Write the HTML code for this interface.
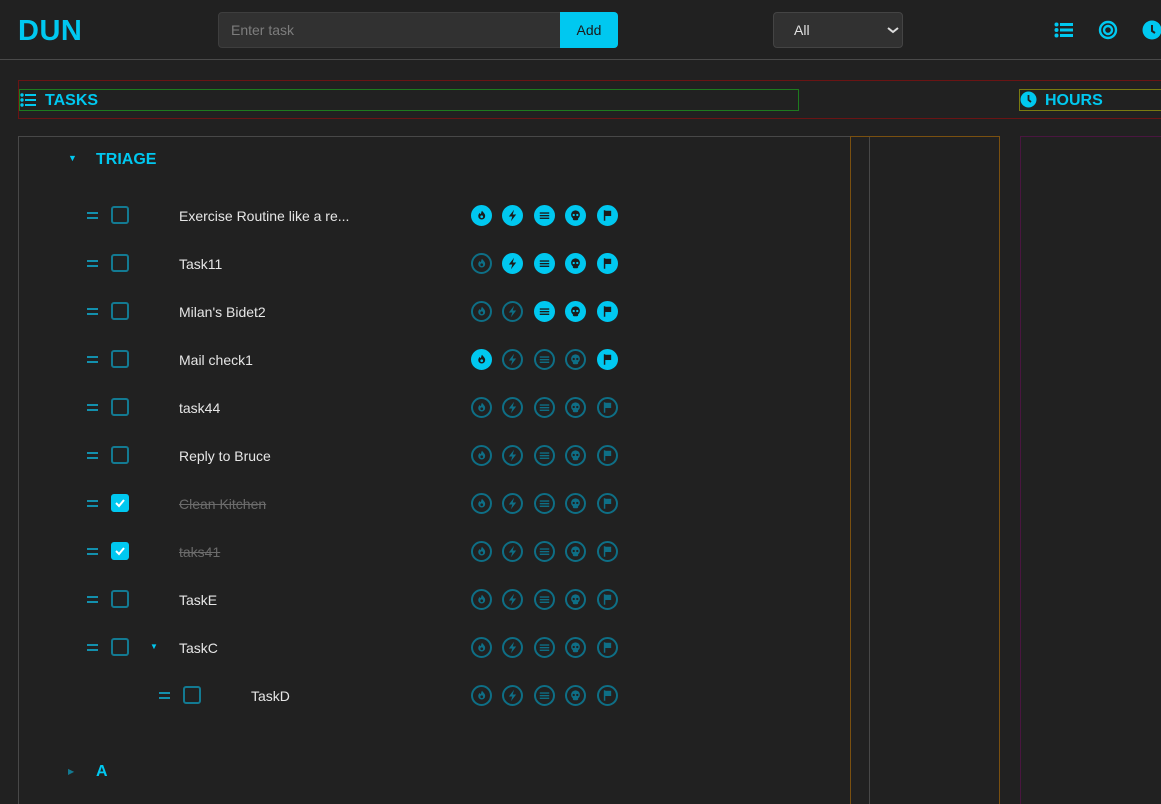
<!DOCTYPE html>
<html style="overflow:hidden;height:804px"><head><meta charset="utf-8"><style>
*{box-sizing:border-box;margin:0;padding:0}
body{width:1161px;height:804px;overflow:hidden;background:#212121;font-family:"Liberation Sans",sans-serif;position:relative;color:#e8e8e8}
.a{position:absolute}
.ic{position:absolute;width:21px;height:21px;border-radius:50%;border:2px solid #0e6f86}
.ic.on{background:#00c8f0;border-color:#00c8f0}
.ic svg{position:absolute;left:-2px;top:-2px;width:21px;height:21px}
.ic svg *{fill:#0e6f86}
.ic.on svg *{fill:#1b1b1b}
.ic svg .bg{fill:#212121}
.ic.on svg .bg{fill:#00c8f0}
.h{position:absolute;width:11px;height:7px;border-top:2px solid #1390ad;border-bottom:2px solid #1390ad}
.cb{position:absolute;width:18px;height:18px;border:2px solid #137a92;border-radius:3px}
.cb.on{background:#00c8f0;border-color:#00c8f0}
.t{position:absolute;font-size:14px;color:#e6e6e6;line-height:16px}
.t.done{color:#6b6b6b;text-decoration:line-through}
</style></head><body>
<div class="a" style="left:18px;top:15px;font-size:29px;font-weight:bold;color:#00c8f0;letter-spacing:0.5px">DUN</div>
<div class="a" style="left:218px;top:12px;width:343px;height:36px;background:#313131;border:1px solid #3e3e3e;border-radius:4px 0 0 4px;color:#7d7d7d;font-size:14px;padding:9px 12px">Enter task</div>
<div class="a" style="left:560px;top:12px;width:58px;height:36px;background:#00c8f0;border-radius:0 4px 4px 0;color:#1a1a1a;font-size:14px;text-align:center;line-height:36px">Add</div>
<div class="a" style="left:773px;top:12px;width:130px;height:36px;background:#313131;border:1px solid #444;border-radius:4px;color:#e0e0e0;font-size:14px;padding:9px 20px">All</div>
<svg class="a" style="left:886px;top:23px" width="14" height="14" viewBox="0 0 14 14"><path d="M2 5l5 4 5-4" stroke="#ddd" stroke-width="2" fill="none"/></svg>
<svg class="a" style="left:1054px;top:22px" width="20" height="16"><g fill="#00c8f0"><circle cx="2.5" cy="2.5" r="2"/><circle cx="2.5" cy="8" r="2"/><circle cx="2.5" cy="13.5" r="2"/><rect x="6" y="1" width="13" height="3"/><rect x="6" y="6.5" width="13" height="3"/><rect x="6" y="12" width="13" height="3"/></g></svg>
<svg class="a" style="left:1098px;top:20px" width="20" height="20"><circle cx="10" cy="10" r="8" stroke="#00c8f0" stroke-width="2.4" fill="none"/><circle cx="10" cy="10" r="4" stroke="#00c8f0" stroke-width="2.4" fill="none"/></svg>
<svg class="a" style="left:1142px;top:20px" width="20" height="20"><circle cx="10" cy="10" r="9.5" fill="#00c8f0"/><path d="M10 5v6l3 2" stroke="#212121" stroke-width="2" fill="none"/></svg>
<div class="a" style="left:0;top:59px;width:1161px;height:1px;background:#4a4a4a"></div>
<div class="a" style="left:18px;top:80px;width:1143px;height:39px;border:1px solid #6a1414;border-right:none"></div>
<div class="a" style="left:19px;top:89px;width:780px;height:22px;border:1px solid #1e7a1e"></div>
<svg class="a" style="left:20px;top:93px" width="17" height="14"><g fill="#00c8f0"><circle cx="2" cy="2" r="1.7"/><circle cx="2" cy="7" r="1.7"/><circle cx="2" cy="12" r="1.7"/><rect x="5" y="1" width="11" height="2"/><rect x="5" y="6" width="11" height="2"/><rect x="5" y="11" width="11" height="2"/></g></svg>
<div class="a" style="left:45px;top:92px;font-size:16px;font-weight:bold;color:#00c8f0">TASKS</div>
<div class="a" style="left:1019px;top:89px;width:142px;height:22px;border:1px solid #7a7a10;border-right:none"></div>
<svg class="a" style="left:1020px;top:91px" width="17" height="17"><circle cx="8.5" cy="8.5" r="8" fill="#00c8f0"/><path d="M8.5 4v5l2.5 2" stroke="#212121" stroke-width="1.8" fill="none"/></svg>
<div class="a" style="left:1045px;top:92px;font-size:16px;font-weight:bold;color:#00c8f0">HOURS</div>
<div class="a" style="left:18px;top:136px;width:982px;height:668px;border:1px solid #484848;border-bottom:none"></div>
<div class="a" style="left:850px;top:136px;width:150px;height:668px;border:1px solid #7a5010;border-bottom:none"></div>
<div class="a" style="left:869px;top:137px;width:1px;height:667px;background:#484848"></div>
<div class="a" style="left:1020px;top:136px;width:141px;height:668px;border:1px solid #4a1640;border-bottom:none;border-right:none"></div>
<div class="a" style="left:68px;top:153px;font-size:9px;color:#00c8f0">▼</div>
<div class="a" style="left:96px;top:151px;font-size:16px;font-weight:bold;color:#00c8f0">TRIAGE</div>
<div class="a" style="left:68px;top:767px;font-size:8px;color:#137a92">▶</div>
<div class="a" style="left:96px;top:763px;font-size:16px;font-weight:bold;color:#00c8f0">A</div>
<div id="rows"></div>
<script>
var fire='<path d="M10.5 5.5c1 1.5 3 2.8 3 5a3.3 3.3 0 0 1-6.6 0c0-1.4.8-2.2 1.4-3 .2.8.7 1 1.2 1 .3-1 .2-2 1-3z"/><circle class="bg" cx="10.2" cy="11.2" r="1.3"/>';
var bolt='<path d="M11.5 4.5l-5 6.5h3.3l-1.3 4.5 5-6.5h-3.3z"/>';
var wave='<rect x="5.5" y="7" width="9" height="1.3"/><rect x="5.5" y="9.5" width="9" height="1.3"/><rect x="5.5" y="12" width="9" height="1.3"/>';
var skull='<circle cx="10" cy="9.3" r="4.2"/><rect x="7.5" y="11" width="5" height="3.5" rx="1"/><circle class="bg" cx="8.3" cy="9.5" r="1.1"/><circle class="bg" cx="11.7" cy="9.5" r="1.1"/>';
var flag='<rect x="6.5" y="5" width="1.4" height="10"/><path d="M7.5 5.5h6v5h-6z"/>';
var gl=[fire,bolt,wave,skull,flag],xs=[471,502,534,565,597];
var rows=[["Exercise Routine like a re...",[1,1,1,1,1]],["Task11",[0,1,1,1,1]],["Milan's Bidet2",[0,0,1,1,1]],["Mail check1",[1,0,0,0,1]],["task44",[0,0,0,0,0]],["Reply to Bruce",[0,0,0,0,0]],["Clean Kitchen",[0,0,0,0,0],1],["taks41",[0,0,0,0,0],1],["TaskE",[0,0,0,0,0]],["TaskC",[0,0,0,0,0],0,1],["TaskD",[0,0,0,0,0],0,0,1]];
var h='';
rows.forEach(function(r,i){var y=215+48*i,n=r[4]?72:0;
h+='<div class="h" style="left:'+(87+n)+'px;top:'+(y-3)+'px"></div>';
h+='<div class="cb'+(r[2]?' on':'')+'" style="left:'+(111+n)+'px;top:'+(y-9)+'px">'+(r[2]?'<svg width="14" height="14" style="position:absolute;left:0;top:0"><path d="M3 7l3 3 5-6" stroke="#fff" stroke-width="2" fill="none"/></svg>':'')+'</div>';
if(r[3])h+='<div class="a" style="left:150px;top:'+(y-5)+'px;font-size:8px;color:#00c8f0">▼</div>';
h+='<div class="t'+(r[2]?' done':'')+'" style="left:'+(179+n)+'px;top:'+(y-7)+'px">'+r[0]+'</div>';
r[1].forEach(function(o,k){h+='<div class="ic'+(o?' on':'')+'" style="left:'+xs[k]+'px;top:'+(y-10)+'px"><svg viewBox="0 0 20 20">'+gl[k]+'</svg></div>';});
});
document.getElementById('rows').innerHTML=h;
</script>
</body></html>
